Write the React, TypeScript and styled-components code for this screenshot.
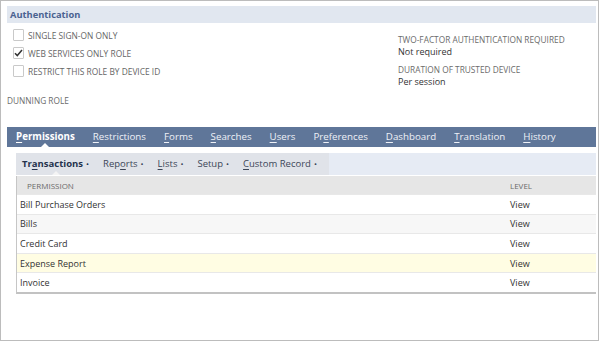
import React from "react";
import styled, { createGlobalStyle } from "styled-components";

const Global = createGlobalStyle`
  html, body { margin: 0; padding: 0; background: #fff; }
  body { font-family: "Open Sans", "Noto Sans", sans-serif; }
  * { box-sizing: border-box; }
`;

const Frame = styled.div`
  width: 599px;
  height: 341px;
  border: 1px solid #bcbcbc;
  padding: 5px 2px 0 6px;
  overflow: hidden;
`;

const SectionHeader = styled.div`
  height: 17px;
  line-height: 17px;
  background: #e1e7f0;
  padding-left: 3px;
  font-size: 9.3px;
  font-weight: 700;
  color: #4a6290;
`;

const TopSection = styled.div`
  display: flex;
`;

const LeftCol = styled.div`
  width: 391px;
  padding-top: 3px;
`;

const CheckList = styled.div`
  padding-left: 6px;
  display: flex;
  flex-direction: column;
`;

const CheckRow = styled.label`
  display: flex;
  align-items: center;
  height: 18px;
  gap: 4px;
  font-size: 8.4px;
  color: #666;
  text-transform: uppercase;
`;

const Box = styled.span`
  width: 11px;
  height: 12px;
  border: 1px solid #c9c9c9;
  border-radius: 1px;
  background: #fff;
  display: flex;
  align-items: center;
  justify-content: center;
`;

const FieldLabel = styled.div<{ $top?: number }>`
  font-size: 8.3px;
  line-height: 12px;
  color: #6b6b6b;
  text-transform: uppercase;
  margin-top: ${(p) => p.$top ?? 0}px;
`;

const FieldValue = styled.div`
  font-size: 9px;
  line-height: 12px;
  color: #333;
`;

const RightCol = styled.div`
  padding-top: 11px;
  display: flex;
  flex-direction: column;
`;

const TabBar = styled.div`
  margin-top: 20px;
  height: 20px;
  background: #5f7699;
  display: flex;
  align-items: center;
`;

const Tab = styled.div<{ $active?: boolean }>`
  position: relative;
  padding: 0 9px;
  font-size: 9.75px;
  line-height: 20px;
  color: ${(p) => (p.$active ? "#fff" : "#eef1f7")};
  font-weight: ${(p) => (p.$active ? 700 : 400)};
  u { text-decoration-thickness: 1px; text-underline-offset: 1.5px; }
`;

const Notch = styled.span<{ $color: string }>`
  position: absolute;
  left: 50%;
  bottom: 0;
  margin-left: -4px;
  width: 0;
  height: 0;
  border-left: 4px solid transparent;
  border-right: 4px solid transparent;
  border-bottom: 4px solid ${(p) => p.$color};
`;

const Inner = styled.div`
  margin-left: 9px;
  margin-top: 6px;
`;

const SubTabBar = styled.div`
  height: 22px;
  background: #e6ebf4;
  display: flex;
`;

const SubTabGroup = styled.div`
  display: flex;
  align-items: center;
  background: #e0e3e9;
  padding-right: 5px;
`;

const SubTab = styled.div<{ $active?: boolean }>`
  position: relative;
  height: 22px;
  line-height: 22px;
  padding: 0 7px 0 ${(p) => (p.$active ? 6 : 7)}px;
  font-size: 9.5px;
  color: ${(p) => (p.$active ? "#25334d" : "#3c4658")};
  font-weight: ${(p) => (p.$active ? 700 : 400)};
  white-space: nowrap;
  u { text-decoration-thickness: 1px; text-underline-offset: 1.5px; }
`;

const Dot = styled.span`
  font-size: 8px;
  margin-left: 3px;
  font-weight: 400;
`;

const Table = styled.div`
  margin-top: 1px;
  border-left: 1px solid #c6c6c6;
  border-bottom: 2px solid #c2c2c2;
`;

const HeadRow = styled.div`
  display: flex;
  height: 18px;
  align-items: center;
  background: #e6e6e6;
  font-size: 8px;
  color: #6b6b6b;
  text-transform: uppercase;
`;

const Row = styled.div<{ $bg: string }>`
  display: flex;
  height: 19.6px;
  align-items: center;
  background: ${(p) => p.$bg};
  border-top: 1px solid #e8e8e8;
  font-size: 9px;
  color: #333;
`;

const NameCell = styled.div<{ $pad: number }>`
  width: 493px;
  padding-left: ${(p) => p.$pad}px;
`;

const LevelCell = styled.div`
  flex: 1;
`;

const Check = () => (
  <svg width="9" height="8" viewBox="0 0 9 8">
    <path d="M1 4.2 L3.3 6.6 L8 1" fill="none" stroke="#333" strokeWidth="1.5" />
  </svg>
);

const tabs: { label: React.ReactNode; active?: boolean }[] = [
  { label: <><u>P</u>ermissions</>, active: true },
  { label: <><u>R</u>estrictions</> },
  { label: <><u>F</u>orms</> },
  { label: <><u>S</u>earches</> },
  { label: <><u>U</u>sers</> },
  { label: <>Pr<u>e</u>ferences</> },
  { label: <><u>D</u>ashboard</> },
  { label: <><u>T</u>ranslation</> },
  { label: <><u>H</u>istory</> },
];

const subtabs: { label: React.ReactNode; active?: boolean }[] = [
  { label: <>Tr<u>a</u>nsactions</>, active: true },
  { label: <>Rep<u>o</u>rts</> },
  { label: <><u>L</u>ists</> },
  { label: <>Setup</> },
  { label: <><u>C</u>ustom Record</> },
];

const rows = [
  { name: "Bill Purchase Orders", bg: "#ffffff" },
  { name: "Bills", bg: "#f7f7f7" },
  { name: "Credit Card", bg: "#ffffff" },
  { name: "Expense Report", bg: "#fffde3" },
  { name: "Invoice", bg: "#ffffff" },
];

export default function App() {
  return (
    <>
      <Global />
      <Frame>
        <SectionHeader>Authentication</SectionHeader>
        <TopSection>
          <LeftCol>
            <CheckList>
              <CheckRow>
                <Box />
                Single Sign-On Only
              </CheckRow>
              <CheckRow>
                <Box>
                  <Check />
                </Box>
                Web Services Only Role
              </CheckRow>
              <CheckRow>
                <Box />
                Restrict This Role by Device ID
              </CheckRow>
            </CheckList>
            <FieldLabel $top={15}>Dunning Role</FieldLabel>
          </LeftCol>
          <RightCol>
            <FieldLabel>Two-Factor Authentication Required</FieldLabel>
            <FieldValue>Not required</FieldValue>
            <FieldLabel $top={6}>Duration of Trusted Device</FieldLabel>
            <FieldValue>Per session</FieldValue>
          </RightCol>
        </TopSection>
        <TabBar>
          {tabs.map((t, i) => (
            <Tab key={i} $active={t.active}>
              {t.label}
              {t.active && <Notch $color="#ffffff" />}
            </Tab>
          ))}
        </TabBar>
        <Inner>
          <SubTabBar>
            <SubTabGroup>
              {subtabs.map((s, i) => (
                <SubTab key={i} $active={s.active}>
                  {s.label}
                  <Dot>•</Dot>
                  {s.active && <Notch $color="#f4f4f4" />}
                </SubTab>
              ))}
            </SubTabGroup>
          </SubTabBar>
          <Table>
            <HeadRow>
              <NameCell $pad={10}>Permission</NameCell>
              <LevelCell>Level</LevelCell>
            </HeadRow>
            {rows.map((r) => (
              <Row key={r.name} $bg={r.bg}>
                <NameCell $pad={3}>{r.name}</NameCell>
                <LevelCell>View</LevelCell>
              </Row>
            ))}
          </Table>
        </Inner>
      </Frame>
    </>
  );
}
